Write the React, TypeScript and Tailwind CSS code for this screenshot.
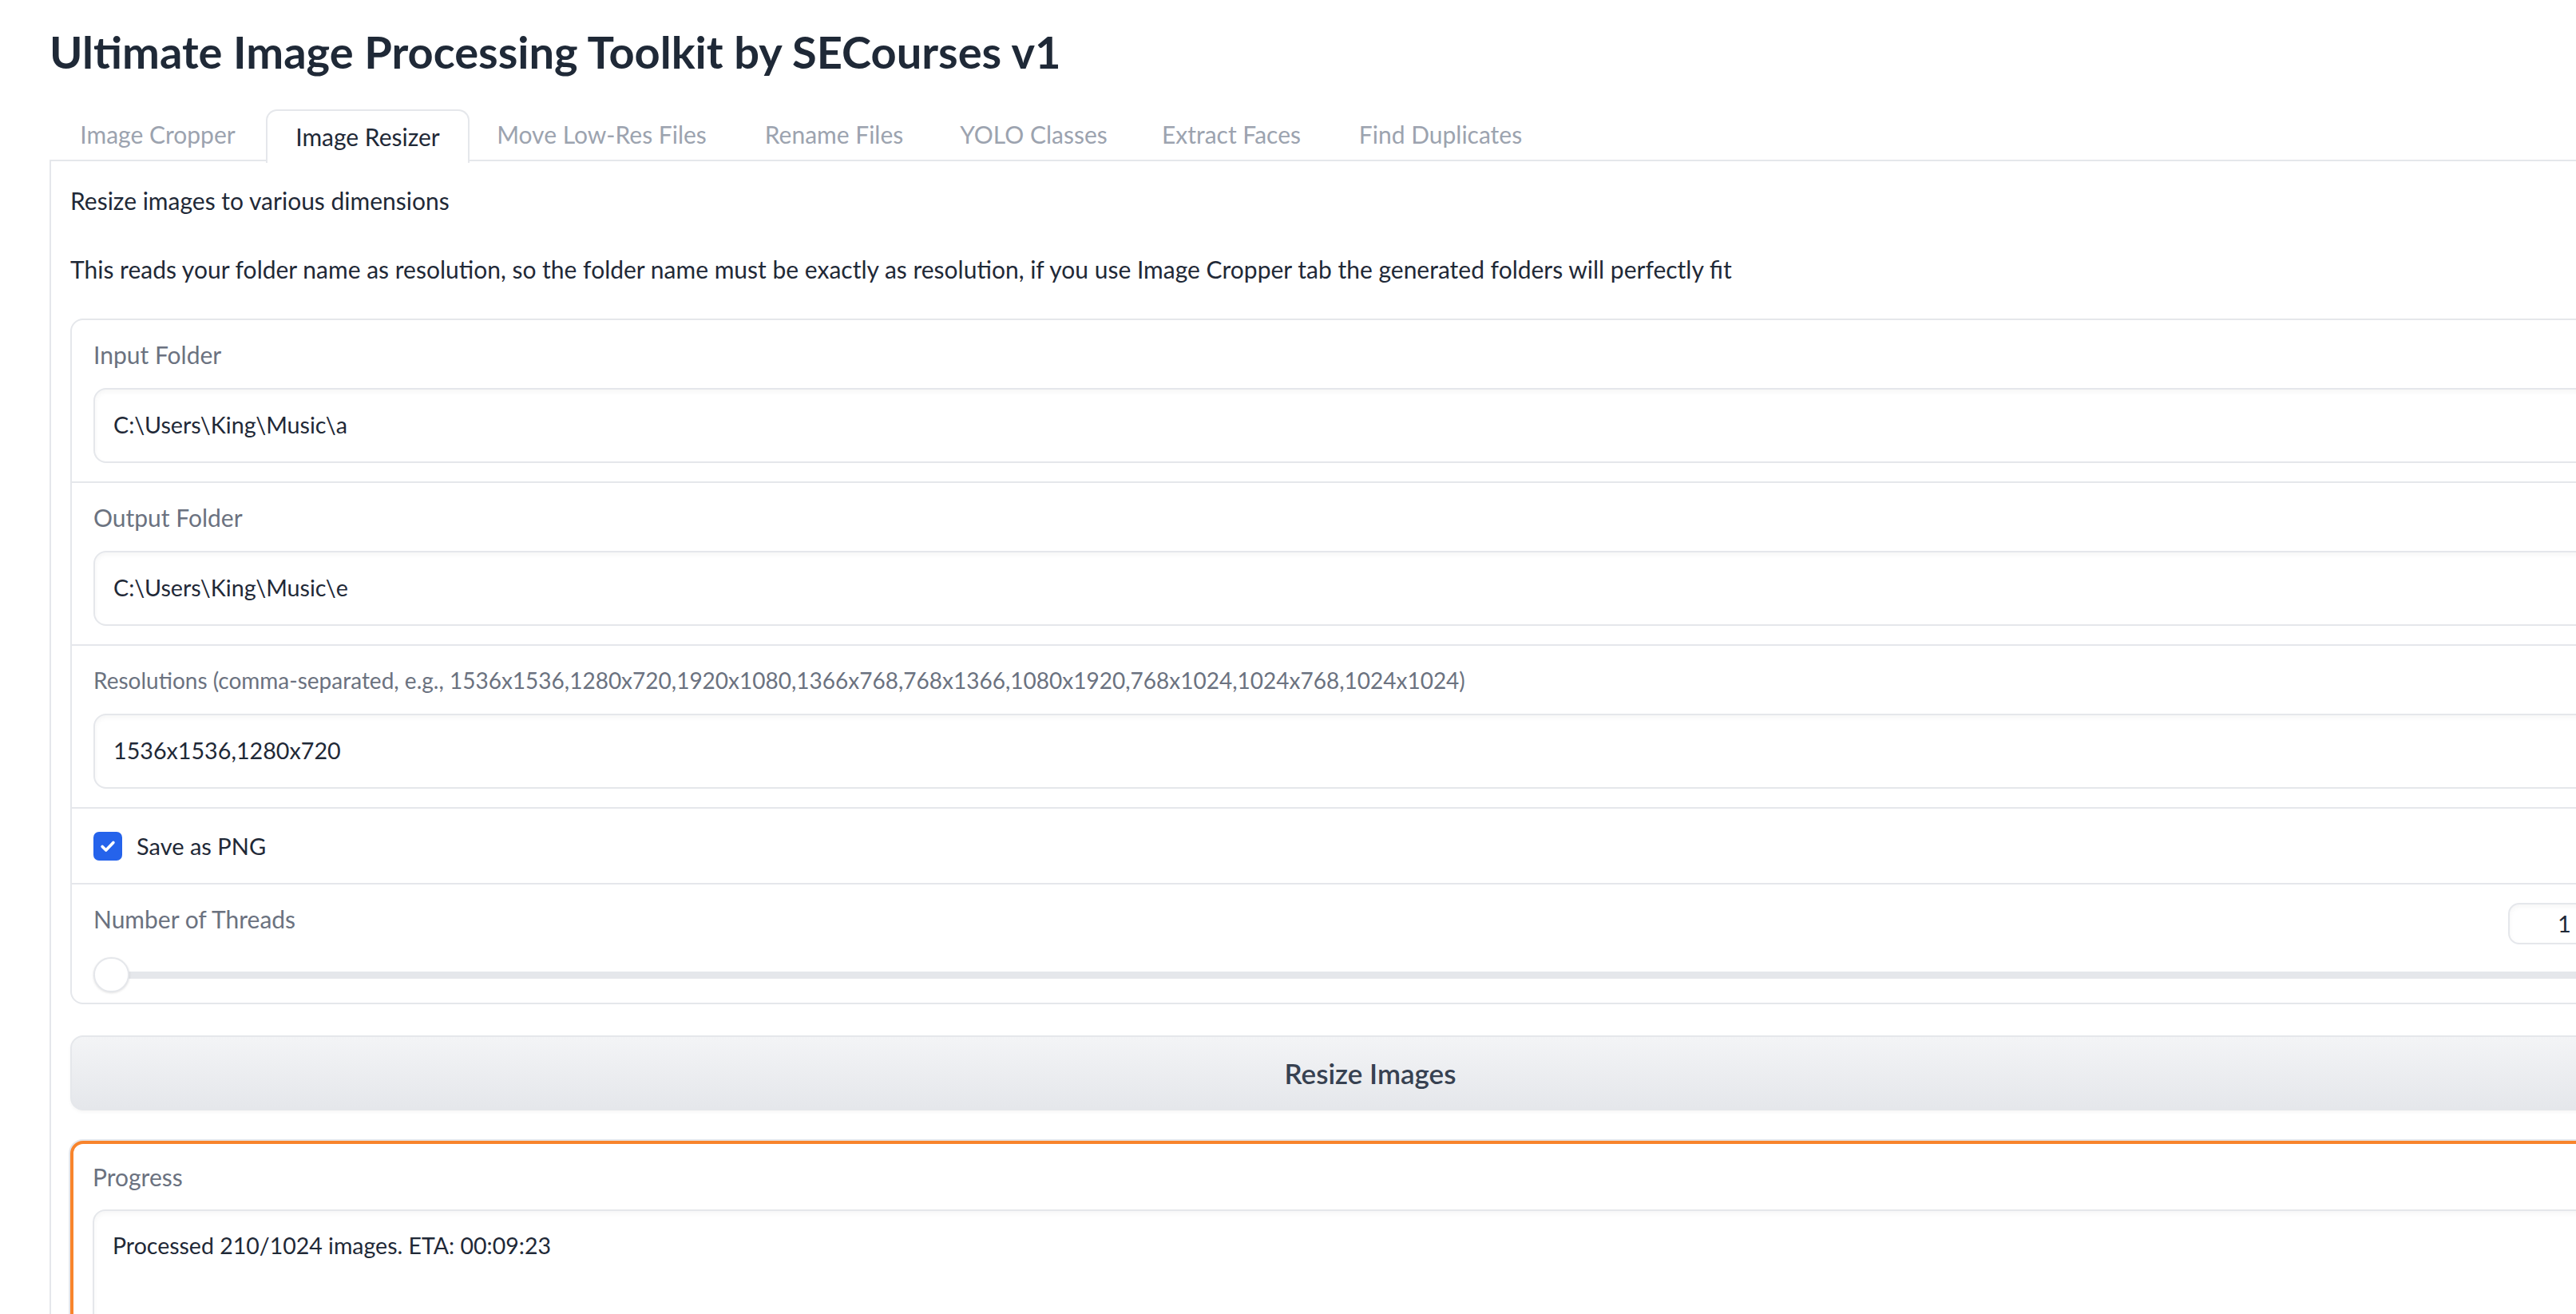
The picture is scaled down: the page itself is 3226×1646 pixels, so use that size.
import React from "react";

const tabs: { label: string; w: string; active?: boolean }[] = [
  { label: "Image Cropper", w: "w-[271px]" },
  { label: "Image Resizer", w: "w-[255px]", active: true },
  { label: "Move Low-Res Files", w: "w-[331px]" },
  { label: "Rename Files", w: "w-[251px]" },
  { label: "YOLO Classes", w: "w-[249px]" },
  { label: "Extract Faces", w: "w-[246px]" },
  { label: "Find Duplicates", w: "w-[278px]" },
];

function TextRow({ label, value, small }: { label: string; value: string; small?: boolean }) {
  return (
    <div className="px-[27px] pt-[22px] pb-[23px] border-b-2 border-[#e5e7eb]">
      <div className={"h-[42px] leading-[42px] text-[#6b7280] mb-[21px] " + (small ? "text-[28px]" : "text-[30px]")}>{label}</div>
      <div className="h-[94px] rounded-[16px] border-2 border-[#e5e7eb] bg-white shadow-[inset_0_3px_6px_rgba(0,0,0,0.04)] flex items-center px-[23px] text-[28.7px] text-[#1f2937]">
        {value}
      </div>
    </div>
  );
}

export default function App() {
  return (
    <div className="w-[3226px] h-[1646px] overflow-hidden bg-white font-['Lato','Noto_Sans',sans-serif]">
      <div className="w-[3432px] px-[62px]">
        <h1 className="h-[137px] pt-[20px] text-[56px] font-bold text-[#1f2937] leading-[90px]">
          Ultimate Image Processing Toolkit by SECourses v1
        </h1>
        <div className="flex border-b-2 border-[#e5e7eb] h-[65px]">
          {tabs.map((t) =>
            t.active ? (
              <div
                key={t.label}
                className={t.w + " h-[67px] -mb-[2px] flex items-center justify-center rounded-t-[14px] border-2 border-b-0 border-[#e5e7eb] bg-white text-[30px] text-[#1f2937]"}
              >
                {t.label}
              </div>
            ) : (
              <div key={t.label} className={t.w + " flex items-center justify-center text-[30px] text-[#9ca3af]"}>
                {t.label}
              </div>
            )
          )}
        </div>
        <div className="border-l-2 border-r-2 border-[#e5e7eb] px-[24px] pt-[28px] pb-[40px]">
          <p className="h-[42px] leading-[42px] text-[30px] text-[#1f2937]">Resize images to various dimensions</p>
          <p className="mt-[44px] h-[42px] leading-[42px] text-[30px] text-[#1f2937]">
            This reads your folder name as resolution, so the folder name must be exactly as resolution, if you use Image Cropper tab the generated folders will perfectly fit
          </p>
          <div className="mt-[41px] rounded-[16px] border-2 border-[#e5e7eb] bg-white overflow-hidden">
            <TextRow label="Input Folder" value={"C:\\Users\\King\\Music\\a"} />
            <TextRow label="Output Folder" value={"C:\\Users\\King\\Music\\e"} />
            <TextRow
              small
              label="Resolutions (comma-separated, e.g., 1536x1536,1280x720,1920x1080,1366x768,768x1366,1080x1920,768x1024,1024x768,1024x1024)"
              value="1536x1536,1280x720"
            />
            <div className="h-[95px] border-b-2 border-[#e5e7eb] px-[27px] flex items-center gap-[18px]">
              <div className="w-[36px] h-[36px] rounded-[7px] bg-[#2563eb] flex items-center justify-center">
                <svg width="22" height="22" viewBox="0 0 24 24" fill="none" stroke="white" strokeWidth="4" strokeLinecap="round" strokeLinejoin="round">
                  <path d="M4.5 12.5l5 5 10-10.5" />
                </svg>
              </div>
              <span className="text-[29px] text-[#1f2937]">Save as PNG</span>
            </div>
            <div className="px-[27px] pt-[22px] pb-[13px]">
              <div className="flex justify-between items-start">
                <div className="h-[42px] leading-[42px] text-[30px] text-[#6b7280]">Number of Threads</div>
                <div className="mt-[1px] w-[174px] h-[52px] rounded-[14px] border-2 border-[#e5e7eb] shadow-[inset_0_3px_6px_rgba(0,0,0,0.04)] flex items-center pl-[60px] text-[29px] text-[#1f2937]">
                  1
                </div>
              </div>
              <div className="relative mt-[16px] h-[44px] flex items-center">
                <div className="w-full h-[9px] rounded-full bg-[#e5e7eb]" />
                <div className="absolute left-0 top-0 w-[45px] h-[44px] rounded-full bg-white border-2 border-[#e5e7eb] shadow-[0_1px_3px_rgba(0,0,0,0.12)]" />
              </div>
            </div>
          </div>
          <button className="mt-[39px] w-full h-[94px] rounded-[16px] border-2 border-[#e5e7eb] bg-gradient-to-b from-[#f3f4f6] to-[#e5e7eb] text-[35px] font-semibold text-[#374151] shadow-[0_2px_4px_rgba(0,0,0,0.04)]">
            Resize Images
          </button>
          <div className="mt-[38px] rounded-[16px] border-[4px] border-[#f8842c] shadow-[0_0_0_2px_#e5e7eb] bg-white px-[24px] pt-[20px]">
            <div className="h-[42px] leading-[42px] text-[30px] text-[#6b7280] mb-[20px]">Progress</div>
            <div className="h-[240px] rounded-[16px] border-2 border-[#e5e7eb] shadow-[inset_0_3px_6px_rgba(0,0,0,0.04)] px-[23px] pt-[22px] text-[28.5px] leading-[42px] text-[#1f2937]">
              Processed 210/1024 images. ETA: 00:09:23
            </div>
          </div>
        </div>
      </div>
    </div>
  );
}
